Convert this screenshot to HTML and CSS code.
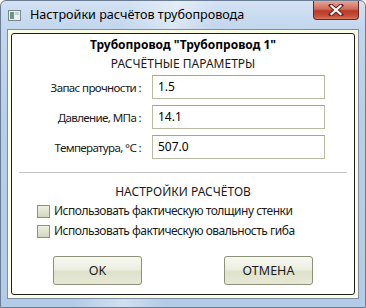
FILE: index.html
```html
<!DOCTYPE html>
<html lang="ru">
<head>
<meta charset="utf-8">
<title>Настройки расчётов трубопровода</title>
<link rel="stylesheet" href="styles.css">
</head>
<body>
<div class="window">
  <div class="titlebar">
    <svg class="app-icon" width="13" height="11" viewBox="0 0 13 11">
      <rect x="0.5" y="0.5" width="12" height="10" fill="#e9eef0" stroke="#7a8790"/>
      <rect x="2" y="2" width="4" height="7" fill="#6d957f"/>
      <rect x="7" y="2" width="4" height="3" fill="#c7d0d4"/>
    </svg>
    <span class="title">Настройки расчётов трубопровода</span>
    <div class="close">
      <svg width="16" height="12" viewBox="0 0 16 12">
        <path d="M3 1.5 L13 10.5 M13 1.5 L3 10.5" stroke="#6b2320" stroke-width="4.2" stroke-linecap="square"/>
        <path d="M3.5 2 L12.5 10 M12.5 2 L3.5 10" stroke="#ffffff" stroke-width="2.2" stroke-linecap="square"/>
      </svg>
    </div>
  </div>
  <div class="client">
    <div class="panel">
      <div class="heading">Трубопровод "Трубопровод 1"</div>
      <div class="section">РАСЧЁТНЫЕ ПАРАМЕТРЫ</div>
      <div class="form">
        <label class="label">Запас прочности :</label>
        <div class="field">1.5</div>
        <label class="label">Давление, МПа :</label>
        <div class="field">14.1</div>
        <label class="label">Температура, °С :</label>
        <div class="field">507.0</div>
      </div>
      <div class="separator"></div>
      <div class="section section-2">НАСТРОЙКИ РАСЧЁТОВ</div>
      <div class="checks">
        <div class="check"><span class="box"></span>Использовать фактическую толщину стенки</div>
        <div class="check"><span class="box"></span>Использовать фактическую овальность гиба</div>
      </div>
      <div class="buttons">
        <div class="button">OK</div>
        <div class="button">ОТМЕНА</div>
      </div>
    </div>
  </div>
</div>
</body>
</html>
```

FILE: styles.css
```css
html, body {
  margin: 0;
  padding: 0;
  background: #ffffff;
}

body {
  width: 366px;
  height: 308px;
  overflow: hidden;
  font-family: "Noto Sans", "Open Sans", sans-serif;
  font-size: 12px;
  color: #000;
}

.window {
  box-sizing: border-box;
  width: 366px;
  height: 308px;
  border: 1px solid #6a7d92;
  border-radius: 6px 6px 0 0;
  background:
    linear-gradient(100deg, rgba(255,255,255,0) 30%, rgba(255,255,255,0.4) 42%, rgba(255,255,255,0) 52%),
    linear-gradient(to bottom, #d3e2f3 0px, #c2d6ed 28px, #b8cfe8 120px, #b3cbe6 100%);
  display: flex;
  flex-direction: column;
}

.titlebar {
  height: 28px;
  display: flex;
  align-items: flex-start;
  padding-left: 7px;
}

.app-icon {
  margin-top: 9px;
  flex: none;
}

.title {
  margin-left: 9px;
  margin-top: 6px;
  font-size: 12.6px;
  line-height: 16px;
  white-space: nowrap;
}

.close {
  margin-left: auto;
  margin-right: 6px;
  width: 46px;
  height: 19px;
  box-sizing: border-box;
  border: 1px solid #5b2a2a;
  border-top: none;
  border-radius: 0 0 4px 4px;
  background: linear-gradient(to bottom, #e6a69a 0%, #d06a58 45%, #b93a28 55%, #c7503c 85%, #d97a62 100%);
  display: flex;
  align-items: center;
  justify-content: center;
}

.client {
  flex: 1;
  margin: 0 6px 8px 6px;
  border: 1px solid #7c8ea3;
  background: #fbfce4;
  padding: 3px;
  display: flex;
}

.panel {
  flex: 1;
  border: 1px solid #1e1e1e;
  border-radius: 3px;
  background: #ffffff;
  display: flex;
  flex-direction: column;
}

.heading {
  font-weight: bold;
  text-align: center;
  line-height: 16px;
  margin-top: 3px;
}

.section {
  text-align: center;
  line-height: 16px;
  margin-top: 3px;
  color: #1a1a1a;
}

.form {
  display: grid;
  grid-template-columns: 129px 173px;
  column-gap: 11px;
  row-gap: 6px;
  align-items: center;
  margin-top: 3px;
}

.label {
  text-align: right;
  white-space: nowrap;
  color: #1a1a1a;
  font-size: 11.6px;
  letter-spacing: -0.65px;
}

.field {
  box-sizing: border-box;
  height: 24px;
  border: 1px solid #b8baa2;
  border-top-color: #a3a58c;
  background: #fff;
  padding-left: 5px;
  line-height: 22px;
}

.separator {
  height: 1px;
  background: #c6c6c6;
  margin: 13px 7px 0 7px;
}

.section-2 {
  margin-top: 11px;
}

.checks {
  display: flex;
  flex-direction: column;
  gap: 4px;
  margin-top: 3px;
  padding-left: 25px;
}

.check {
  display: flex;
  align-items: center;
  gap: 4px;
  line-height: 16px;
  white-space: nowrap;
  color: #1a1a1a;
  letter-spacing: -0.5px;
}

.box {
  box-sizing: border-box;
  width: 13px;
  height: 13px;
  border: 1px solid #8e9180;
  background: linear-gradient(to bottom, #eef0e0, #d3d6bd);
  flex: none;
}

.buttons {
  display: flex;
  justify-content: space-between;
  padding: 0 41px 0 41px;
  margin-top: 17px;
}

.button {
  box-sizing: border-box;
  width: 89px;
  height: 29px;
  border: 1px solid #8d9179;
  border-radius: 3px;
  background: linear-gradient(to bottom, #f8f9f2 0%, #eceee0 45%, #dfe2ca 55%, #e6e8d6 100%);
  display: flex;
  align-items: center;
  justify-content: center;
  font-size: 12.5px;
  color: #1a1a1a;
}
```
